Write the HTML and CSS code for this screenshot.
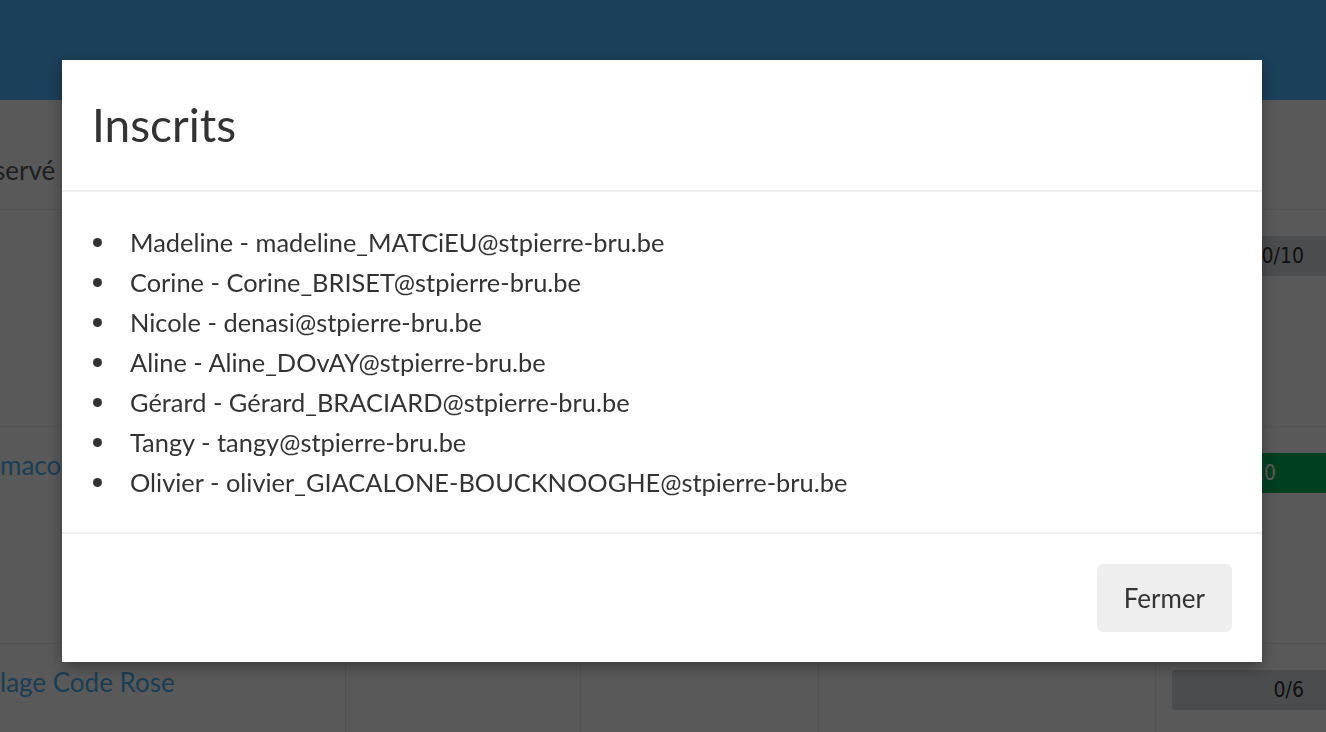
FILE: index.html
```html
<!DOCTYPE html>
<html lang="fr">
<head>
  <meta charset="UTF-8" />
  <meta name="viewport" content="width=device-width, initial-scale=1.0" />
  <title>Inscrits</title>
  <link rel="stylesheet" href="styles.css">
</head>
<body>
  <div class="topbar"></div>

  <div class="table">
    <div class="row row-head">
      <div class="cell first">servé</div>
      <div class="cell"></div>
      <div class="cell"></div>
      <div class="cell"></div>
      <div class="cell"></div>
    </div>
    <div class="row">
      <div class="cell first"></div>
      <div class="cell"></div>
      <div class="cell"></div>
      <div class="cell"></div>
      <div class="cell"><div class="bar">0/10</div></div>
    </div>
    <div class="row">
      <div class="cell first"><a href="#">maco</a></div>
      <div class="cell"></div>
      <div class="cell"></div>
      <div class="cell"></div>
      <div class="cell"><div class="bar bar-full">10</div></div>
    </div>
    <div class="row">
      <div class="cell first"><a href="#">lage Code Rose</a></div>
      <div class="cell"></div>
      <div class="cell"></div>
      <div class="cell"></div>
      <div class="cell"><div class="bar">0/6</div></div>
    </div>
  </div>

  <div class="backdrop">
    <div class="modal">
      <div class="modal-header">
        <h4 class="modal-title">Inscrits</h4>
      </div>
      <div class="modal-body">
        <ul class="people">
          <li>Madeline - madeline_MATCiEU@stpierre-bru.be</li>
          <li>Corine - Corine_BRISET@stpierre-bru.be</li>
          <li>Nicole - denasi@stpierre-bru.be</li>
          <li>Aline - Aline_DOvAY@stpierre-bru.be</li>
          <li>Gérard - Gérard_BRACIARD@stpierre-bru.be</li>
          <li>Tangy - tangy@stpierre-bru.be</li>
          <li>Olivier - olivier_GIACALONE-BOUCKNOOGHE@stpierre-bru.be</li>
        </ul>
      </div>
      <div class="modal-footer">
        <button class="btn">Fermer</button>
      </div>
    </div>
  </div>
</body>
</html>
```

FILE: styles.css
```css
body {
  margin: 0;
  font-family: Lato, "Noto Sans", sans-serif;
  font-size: 26px;
  line-height: 40px;
  color: #333;
  background-color: #fff;
  overflow: hidden;
}
.topbar {
  height: 100px;
  background-color: #4db7fe;
}
.table {
  width: 1326px;
}
.row {
  display: grid;
  grid-template-columns: 345px 235px 238px 337px 1fr;
  height: 216px;
  border-bottom: 1px solid #ebebeb;
}
.row-head {
  height: 109px;
}
.row-head .cell {
  padding-top: 50px;
  color: #5c5c5c;
}
.cell {
  padding: 18px 0 0 16px;
  border-left: 1px solid #ebebeb;
}
.cell.first {
  padding-left: 0;
  border-left: none;
}
.row-head .cell.first {
  text-indent: -6px;
}
.cell a {
  color: #4db1f3;
  text-decoration: none;
}
.bar {
  margin-top: 8px;
  height: 40px;
  padding-right: 22px;
  background-color: #d6d9de;
  border-radius: 3px 0 0 3px;
  text-align: right;
  font-family: "DejaVu Sans Condensed", "DejaVu Sans", sans-serif;
  font-size: 21px;
  line-height: 40px;
  color: #333;
}
.bar-full {
  background-color: #00b45b;
  color: #fff;
  padding-right: 50px;
}
.backdrop {
  position: fixed;
  top: 0;
  left: 0;
  right: 0;
  bottom: 0;
  background-color: rgba(0, 0, 0, 0.65);
}
.modal {
  width: 1200px;
  margin: 60px 0 0 62px;
  background-color: #fff;
  box-shadow: 0 5px 15px rgba(0, 0, 0, 0.35);
}
.modal-header {
  padding: 30px;
  border-bottom: 2px solid #efefef;
}
.modal-title {
  margin: 0;
  font-size: 46px;
  font-weight: 400;
  line-height: 70px;
}
.modal-body {
  padding: 30px;
  font-size: 25.4px;
}
.people {
  margin: 0;
  padding-left: 38px;
  list-style: none;
}
.people li {
  position: relative;
}
.people li::before {
  content: "";
  position: absolute;
  left: -37px;
  top: 16px;
  width: 9px;
  height: 9px;
  border-radius: 50%;
  background-color: #333;
}
.modal-footer {
  padding: 30px;
  text-align: right;
  border-top: 2px solid #efefef;
}
.btn {
  padding: 12px 25px;
  font-family: inherit;
  font-size: 26px;
  line-height: 40px;
  color: #333;
  background-color: #eee;
  border: 2px solid #eee;
  border-radius: 6px;
}
```
